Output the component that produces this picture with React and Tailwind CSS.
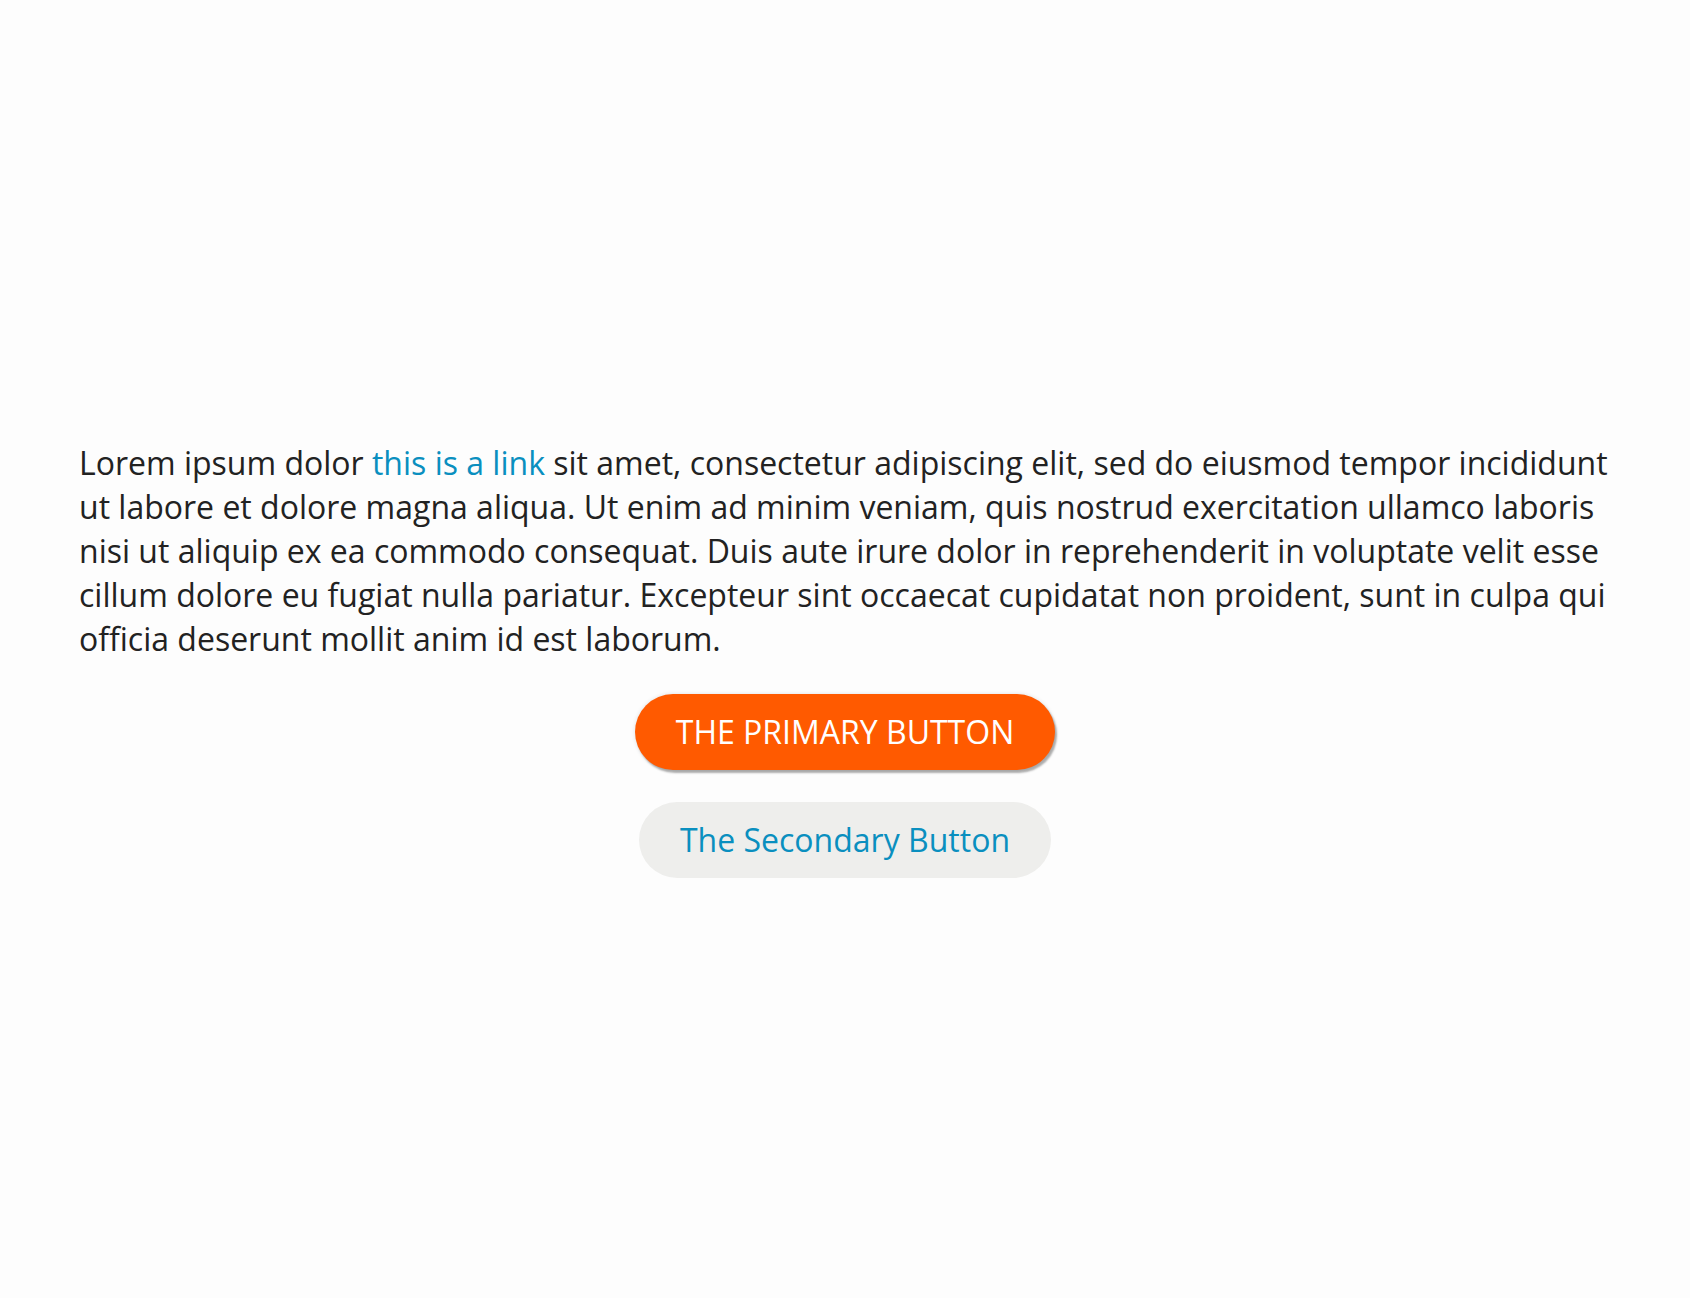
import React from 'react';

const App = () => {
  return (
    <div className="min-h-screen bg-[#fdfdfd] text-[#222222] font-['Open_Sans',sans-serif]">
      <main className="pt-[441px] pb-20">
        <p className="ml-[79px] mr-[68px] text-[32px] leading-[44px]">
          Lorem ipsum dolor{' '}
          <a href="#" className="text-[#0a8fbf]">this is a link</a>{' '}
          sit amet, consectetur adipiscing elit, sed do eiusmod tempor incididunt ut labore et dolore magna
          aliqua. Ut enim ad minim veniam, quis nostrud exercitation ullamco laboris nisi ut aliquip ex ea
          commodo consequat. Duis aute irure dolor in reprehenderit in voluptate velit esse cillum dolore eu
          fugiat nulla pariatur. Excepteur sint occaecat cupidatat non proident, sunt in culpa qui officia
          deserunt mollit anim id est laborum.
        </p>

        <div className="mt-[33px] flex flex-col items-center gap-8">
          <button className="h-[76px] px-[41px] rounded-full bg-[#ff5a00] text-white text-[32px] uppercase shadow-[2px_3px_2px_rgba(0,0,0,0.3),0_0_4px_rgba(0,0,0,0.12)]">
            The Primary Button
          </button>
          <button className="h-[76px] px-[41px] rounded-full bg-[#eeeeec] text-[#0a8fbf] text-[32px]">
            The Secondary Button
          </button>
        </div>
      </main>
    </div>
  );
};

export default App;
